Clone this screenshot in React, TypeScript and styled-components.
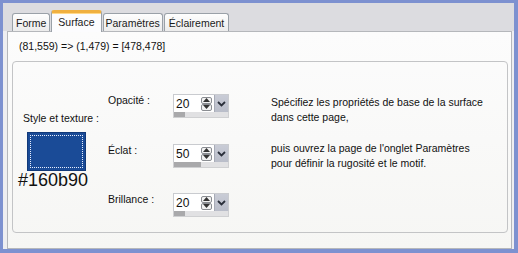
import React from "react";
import styled, { createGlobalStyle, css } from "styled-components";

const Global = createGlobalStyle`
  html, body { margin: 0; padding: 0; background: #ffffff; }
  body { font-family: "Liberation Sans", Arial, sans-serif; }
`;

const Window = styled.div`
  width: 518px;
  height: 253px;
  box-sizing: border-box;
  border-style: solid;
  border-color: #7d91d0;
  border-width: 3px 4px 4px 3px;
  background: #eeeef1;
  display: flex;
  flex-direction: column;
  font-size: 10.5px;
  color: #111;
`;

const TabStrip = styled.div`
  height: 28px;
  flex: none;
  background: #dcdce0;
  display: flex;
  align-items: flex-end;
  padding-left: 9px;
  gap: 1px;
  position: relative;
  z-index: 1;
`;

const Tab = styled.div<{ $active?: boolean; $pad: number }>`
  box-sizing: border-box;
  height: 18px;
  padding: 0 ${(p) => p.$pad}px;
  border: 1px solid #9aa1a8;
  border-bottom: none;
  border-radius: 3px 3px 0 0;
  background: linear-gradient(#fefefe, #ececec);
  display: flex;
  align-items: center;
  font-size: 10.5px;
  color: #1a1a1a;
  white-space: nowrap;
  ${(p) =>
    p.$active &&
    css`
      height: 22px;
      margin-bottom: -1px;
      padding-bottom: 2px;
      border-top: 3px solid #f0b040;
      background: #fcfcfe;
      box-shadow: inset 0 1px 0 #ffd88a;
    `}
`;

const Pane = styled.div`
  flex: 1;
  margin: 0 2px 0 4px;
  border: 1px solid #b5b7bb;
  background: linear-gradient(#fcfcfc, #f6f6f4);
  display: flex;
  flex-direction: column;
  padding: 0 3px 15px 4px;
`;

const Coords = styled.div`
  height: 28px;
  display: flex;
  align-items: center;
  padding-left: 7px;
  padding-bottom: 1px;
  font-size: 10.5px;
`;

const Group = styled.div`
  flex: 1;
  border: 1px solid #c3c4c6;
  border-radius: 4px;
  display: flex;
  align-items: flex-start;
`;

const LeftCol = styled.div`
  width: 92px;
  display: flex;
  flex-direction: column;
  align-items: center;
  padding-top: 50px;
`;

const Caption = styled.div`
  font-size: 10.5px;
  margin-left: 4px;
`;

const Swatch = styled.div<{ $color: string }>`
  width: 59px;
  height: 39px;
  margin-top: 8px;
  margin-left: -6px;
  background: ${(p) => p.$color};
  box-sizing: border-box;
  border: 1px solid #123a7a;
  padding: 2px;
  &::after {
    content: "";
    display: block;
    width: 100%;
    height: 100%;
    box-sizing: border-box;
    border: 1px dotted #e8eefc;
  }
`;

const Hex = styled.div`
  font-size: 18px;
  line-height: 18px;
  color: #111;
  margin-left: -12px;
`;

const MidCol = styled.div`
  display: flex;
  flex-direction: column;
  margin-left: 3px;
  padding-top: 32px;
`;

const Row = styled.div<{ $top: number }>`
  display: flex;
  align-items: flex-start;
  margin-top: ${(p) => p.$top}px;
`;

const Label = styled.div`
  width: 65px;
  font-size: 10.5px;
  line-height: 12px;
`;

const Spinner = styled.div`
  width: 56px;
  display: flex;
  flex-direction: column;
`;

const SpinTop = styled.div`
  height: 18px;
  display: flex;
  align-items: stretch;
  background: #fff;
  border: 1px solid #c9cbcf;
  border-bottom: none;
  box-sizing: border-box;
`;

const SpinValue = styled.div`
  flex: 1;
  display: flex;
  align-items: center;
  padding-left: 2px;
  font-size: 12px;
  color: #111;
`;

const Arrows = styled.div`
  width: 12px;
  display: flex;
  flex-direction: column;
  justify-content: center;
  margin-right: 1px;
`;

const ArrowBox = styled.div`
  height: 7px;
  width: 11px;
  box-sizing: border-box;
  border: 1px solid #8a8d92;
  border-radius: 2px;
  background: #f2f2f2;
  display: flex;
  align-items: center;
  justify-content: center;
`;

const Drop = styled.div`
  width: 13px;
  background: linear-gradient(#c9ccd6, #b9bdc9);
  border-left: 1px solid #a7abb6;
  display: flex;
  align-items: center;
  justify-content: center;
`;

const Track = styled.div`
  height: 5px;
  background: #e1e1e3;
  border: 1px solid #cfd0d2;
  border-top: none;
`;

const Fill = styled.div`
  height: 100%;
  background: #a9a9ab;
`;

const RightCol = styled.div`
  margin-left: 42px;
  padding-top: 33px;
  display: flex;
  flex-direction: column;
  gap: 17px;
`;

const Para = styled.p`
  margin: 0;
  font-size: 10.5px;
  line-height: 14.5px;
`;

const Up = () => (
  <svg width="7" height="4" viewBox="0 0 7 4">
    <path d="M0 4 L3.5 0 L7 4 Z" fill="#333" />
  </svg>
);
const Down = () => (
  <svg width="7" height="4" viewBox="0 0 7 4">
    <path d="M0 0 L3.5 4 L7 0 Z" fill="#333" />
  </svg>
);
const Chevron = () => (
  <svg width="9" height="6" viewBox="0 0 9 6">
    <path d="M1 1 L4.5 4.5 L8 1" fill="none" stroke="#2a2f3a" strokeWidth="1.8" />
  </svg>
);

const Spin: React.FC<{ value: number }> = ({ value }) => (
  <Spinner>
    <SpinTop>
      <SpinValue>{value}</SpinValue>
      <Arrows>
        <ArrowBox>
          <Up />
        </ArrowBox>
        <ArrowBox>
          <Down />
        </ArrowBox>
      </Arrows>
      <Drop>
        <Chevron />
      </Drop>
    </SpinTop>
    <Track>
      <Fill style={{ width: `${value}%` }} />
    </Track>
  </Spinner>
);

export default function App() {
  return (
    <>
      <Global />
      <Window>
        <TabStrip>
          <Tab $pad={3}>Forme</Tab>
          <Tab $pad={6} $active>
            Surface
          </Tab>
          <Tab $pad={2}>Paramètres</Tab>
          <Tab $pad={4}>Éclairement</Tab>
        </TabStrip>
        <Pane>
          <Coords>(81,559) =&gt; (1,479) = [478,478]</Coords>
          <Group>
            <LeftCol>
              <Caption>Style et texture :</Caption>
              <Swatch $color="#1a4b97" />
              <Hex>#160b90</Hex>
            </LeftCol>
            <MidCol>
              <Row $top={0}>
                <Label>Opacité :</Label>
                <Spin value={20} />
              </Row>
              <Row $top={26}>
                <Label>Éclat :</Label>
                <Spin value={50} />
              </Row>
              <Row $top={25}>
                <Label>Brillance :</Label>
                <Spin value={20} />
              </Row>
            </MidCol>
            <RightCol>
              <Para>
                Spécifiez les propriétés de base de la surface
                <br />
                dans cette page,
              </Para>
              <Para>
                puis ouvrez la page de l'onglet Paramètres
                <br />
                pour définir la rugosité et le motif.
              </Para>
            </RightCol>
          </Group>
        </Pane>
      </Window>
    </>
  );
}
